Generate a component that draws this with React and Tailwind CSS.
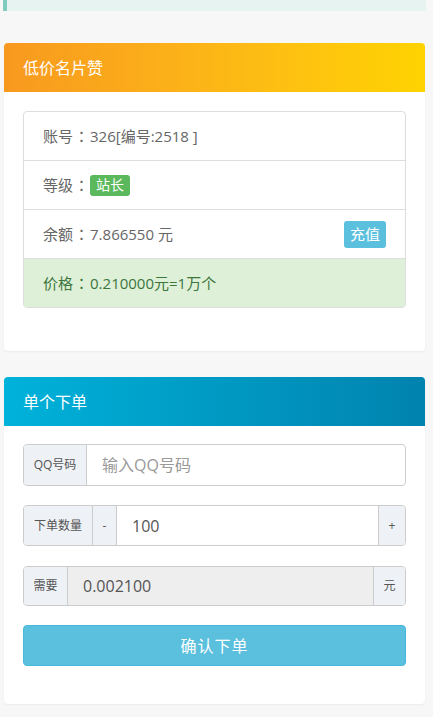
const font = { fontFamily: '"Open Sans", "Noto Sans CJK SC", sans-serif' }

function Colon() {
  return <span className="px-[1px] font-['Noto_Sans_CJK_TC',sans-serif]">：</span>
}

function InfoRow({ children, className = '' }) {
  return (
    <div className={`flex items-center h-[49px] px-[19px] border-t border-[#ddd] first:h-[48px] first:border-t-0 text-[15px] ${className}`}>
      {children}
    </div>
  )
}

export default function App() {
  return (
    <div className="min-h-[717px] bg-[#f7f7f7] pb-4" style={font}>
      <div className="ml-[3px] mr-[7px] h-[11px] bg-[#e7f3f1] border-l-[4px] border-[#7fcbbd]" />

      {/* card 1 */}
      <div className="ml-1 mr-2 mt-[32px] bg-white rounded-[4px] shadow-[0_1px_2px_rgba(0,0,0,0.05)] overflow-hidden">
        <div className="h-[49px] flex items-center px-[19px] text-white text-[16px] bg-gradient-to-r from-[#f8991f] to-[#ffd301]">
          低价名片赞
        </div>
        <div className="px-[19px] pt-[19px] pb-[43px]">
          <div className="border border-[#ddd] rounded-[4px] overflow-hidden text-[#666]">
            <InfoRow>账号<Colon />326[编号:2518 ]</InfoRow>
            <InfoRow>
              等级<Colon />
              <span className="px-[6px] h-[21px] flex items-center rounded-[3px] bg-[#5cb85c] text-white text-[14px] leading-none">站长</span>
            </InfoRow>
            <InfoRow className="justify-between">
              <span>余额<Colon />7.866550 元</span>
              <span className="h-[27px] px-[6px] flex items-center rounded-[3px] bg-[#5bc0de] text-white text-[15px]">充值</span>
            </InfoRow>
            <InfoRow className="bg-[#dff0d8] text-[#3c763d]">价格<Colon />0.210000元=1万个</InfoRow>
          </div>
        </div>
      </div>

      {/* card 2 */}
      <div className="ml-1 mr-2 mt-[26px] bg-white rounded-[4px] shadow-[0_1px_2px_rgba(0,0,0,0.05)] overflow-hidden">
        <div className="h-[49px] flex items-center px-[19px] text-white text-[16px] bg-gradient-to-r from-[#00b2da] to-[#0083ae]">
          单个下单
        </div>
        <div className="px-[19px] pt-[18px] pb-[38px] flex flex-col">
          <div className="flex h-[42px] border border-[#ccc] rounded-[4px] overflow-hidden">
            <div className="w-[63px] flex items-center justify-center bg-[#eef1f5] border-r border-[#ccc] text-[12px] text-[#555]">QQ号码</div>
            <div className="flex-1 flex items-center pl-[15px] text-[16px] text-[#999]">输入QQ号码</div>
          </div>

          <div className="mt-[19px] flex h-[41px] border border-[#ccc] rounded-[4px] overflow-hidden">
            <div className="w-[69px] flex items-center justify-center bg-[#eef1f5] border-r border-[#ccc] text-[12px] text-[#555]">下单数量</div>
            <div className="w-[24px] flex items-center justify-center bg-[#eef1f5] border-r border-[#ccc] text-[12px] text-[#555]">-</div>
            <div className="flex-1 flex items-center pl-[15px] text-[16px] text-[#555]">100</div>
            <div className="w-[27px] flex items-center justify-center bg-[#eef1f5] border-l border-[#ccc] text-[12px] text-[#555]">+</div>
          </div>

          <div className="mt-[20px] flex h-[40px] border border-[#ccc] rounded-[4px] overflow-hidden">
            <div className="w-[44px] flex items-center justify-center bg-[#eef1f5] border-r border-[#ccc] text-[12px] text-[#555]">需要</div>
            <div className="flex-1 flex items-center pl-[15px] bg-[#eee] text-[16px] text-[#555]">0.002100</div>
            <div className="w-[32px] flex items-center justify-center bg-[#eef1f5] border-l border-[#ccc] text-[12px] text-[#555]">元</div>
          </div>

          <button className="mt-[19px] h-[41px] rounded-[4px] bg-[#5bc0de] border border-[#46b8da] text-white text-[16px] tracking-[1px]">
            确认下单
          </button>
        </div>
      </div>
    </div>
  )
}
